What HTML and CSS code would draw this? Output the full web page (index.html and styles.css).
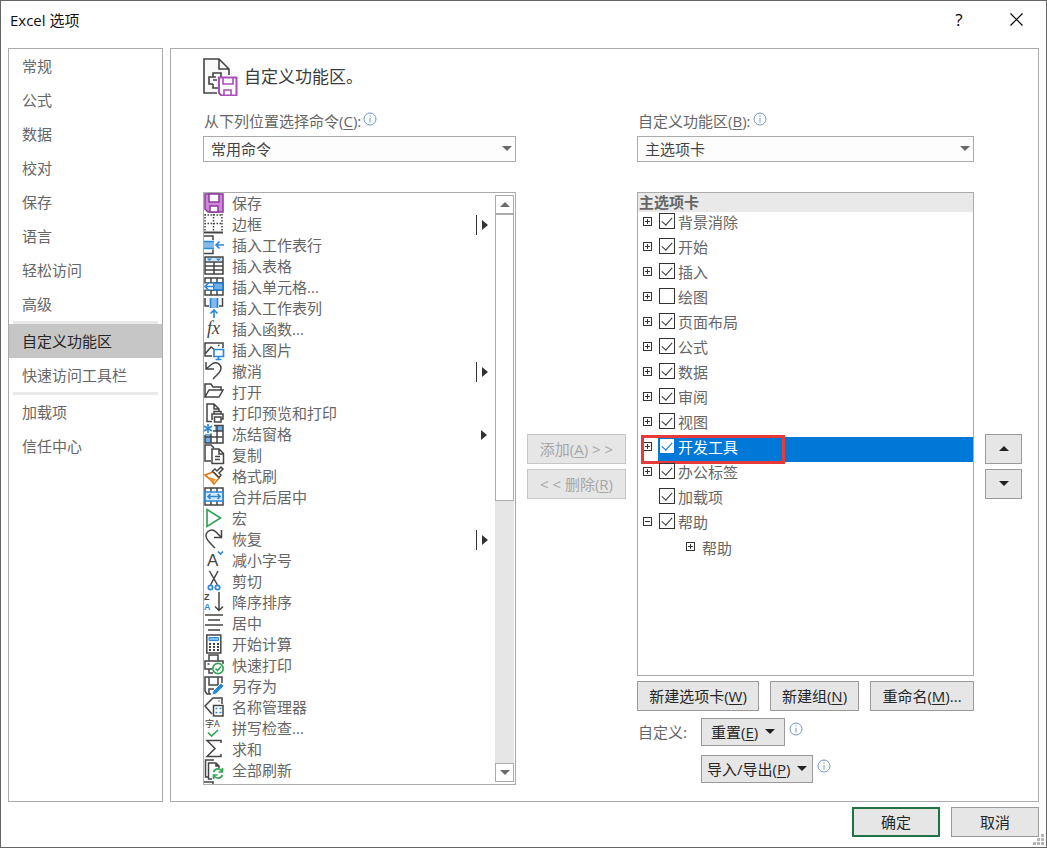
FILE: index.html
```html
<!DOCTYPE html>
<html lang="zh-CN">
<head>
  <meta charset="UTF-8" />
  <meta name="viewport" content="width=device-width, initial-scale=1.0"/>
  <title>Excel 选项</title>
  <link rel="stylesheet" href="styles.css">
</head>
<body>

  <div class="dialog">
    <header class="titlebar">
      <h1>Excel 选项</h1>
      <button class="title-btn" aria-label="帮助">?</button>
      <button class="title-btn" aria-label="关闭">
        <svg width="13" height="13" viewBox="0 0 13 13"><path d="M.5.5l12 12M12.5.5l-12 12" fill="none" stroke="#000" stroke-width="1.2"/></svg>
      </button>
    </header>

    <div class="content">
      <nav class="sidebar">
        <a href="#">常规</a>
        <a href="#">公式</a>
        <a href="#">数据</a>
        <a href="#">校对</a>
        <a href="#">保存</a>
        <a href="#">语言</a>
        <a href="#">轻松访问</a>
        <a href="#">高级</a>
        <hr>
        <a href="#" class="active">自定义功能区</a>
        <a href="#">快速访问工具栏</a>
        <hr>
        <a href="#">加载项</a>
        <a href="#">信任中心</a>
      </nav>

      <main class="panel">
        <div class="heading">
          <svg width="35" height="38" viewBox="0 0 35 38" fill="none" stroke="#444" stroke-width="1.6">
            <path d="M14 35H1V1h15l10 10v6M16 1v10h10" fill="#fafafa"/>
            <path d="M10 19v-4h8v4M13 19H6v7h4M10 26v4h5M10 22h4" />
            <path d="M16 19.500h17.500v18H18.500l-2.500-2.500z" fill="#fff" stroke="#a94fb8" stroke-width="2"/>
            <path d="M20 20v6h10v-6M21 37v-5h7v5" stroke="#a94fb8" stroke-width="1.600"/>
          </svg>
          <h2>自定义功能区。</h2>
        </div>

        <div class="columns">
          <section class="column">
            <div class="field-label">
              <label for="source">从下列位置选择命令(<u>C</u>):</label>
              <svg class="info" viewBox="0 0 14 14"><circle cx="7" cy="7" r="6"/><path d="M7 6v4.500M7 3.500v1.200"/></svg>
            </div>
            <div class="select">
              <select id="source"><option>常用命令</option></select>
            </div>

            <div class="listbox">
              <ul class="commands">
                <li><svg class="ico" viewBox="0 0 20 20"><path d="M1 1h18v18H4l-3-3z" fill="#cf86dc" stroke="#8a3b99" stroke-width="1.500"/><path d="M5 1v8h10V1zM6 19v-6h8v6z" fill="#fff" stroke="#8a3b99" stroke-width="1.500"/></svg>保存</li>
                <li class="split"><svg class="ico" viewBox="0 0 20 20"><path d="M.5 1h18M.5 9.500h18M1 0v17M9.500 0v17M18 0v17" stroke-dasharray="1.500 1.500"/><path d="M0 18.500h19" stroke-width="2"/></svg>边框</li>
                <li><svg class="ico" viewBox="0 0 20 20"><path d="M0 1h9v4M0 18.500h9v-4"/><path d="M0 6.500h10v7H0z" fill="#83b9ec" stroke="none"/><path class="blue" d="M0 6.500h10M0 13.500h10M20 10h-8M15.500 6.500L12 10l3.500 3.500"/></svg>插入工作表行</li>
                <li><svg class="ico" viewBox="0 0 20 20"><path d="M1 1h18v4H1z" fill="#cfe6fa" stroke="none"/><path d="M1 1h18v17H1zM1 6h18M1 10h18M1 14h18M10 6v12"/><path d="M3 2.500h5l-2.500 2.500zM12 2.500h5l-2.500 2.500z" fill="#2b88d8" stroke="none"/></svg>插入表格</li>
                <li><svg class="ico" viewBox="0 0 20 20"><path d="M1 1h18v17H1zM1 6h18M1 13h18M7 1v17M13 1v17"/><path d="M9 6h10v7H9z" fill="#6bb1ee" stroke="#1c77c9"/><path d="M0 6.500h9v6H0z" fill="#fff" stroke="none"/><path class="blue" d="M11 9.500H1M5 5.500l-4 4 4 4"/></svg>插入单元格...</li>
                <li><svg class="ico" viewBox="0 0 20 20"><path d="M1 0v8h4M18.500 0v8H15"/><path d="M6.500 0h7v10h-7z" fill="#83b9ec" stroke="none"/><path class="blue" d="M6.500 0v10M13.500 0v10M10 20v-8M6.500 15.500L10 12l3.500 3.500"/></svg>插入工作表列</li>
                <li><svg class="ico" viewBox="0 0 20 20"><text class="fx" x="3" y="15">fx</text></svg>插入函数...</li>
                <li><svg class="ico" viewBox="0 0 20 20"><path d="M8 16H1V3h18v5M1 14l6-7 4 3M14 5.500h1.500"/><path class="blue" d="M10 9.500h9.500v7H10zM14.500 17v2.500M11.500 19.500h6" fill="#fff"/></svg>插入图片</li>
                <li class="split"><svg class="ico" viewBox="0 0 20 20"><path d="M2 1v7h8M2 8l6-5c4-3 9 0 9 4 0 5-5 7-8 11"/></svg>撤消</li>
                <li><svg class="ico" viewBox="0 0 20 20"><path d="M1 15V2h6l2 3h8v3M1 15L5 8h14l-4 7z"/></svg>打开</li>
                <li><svg class="ico" viewBox="0 0 20 20"><path d="M8 18.500H3V1h7l5 5v2M10 1v5h5"/><path d="M10 11V8.500h7V11M9 16h-1v-5H19v5h-2M10.500 14h6.500v5h-6.500z"/></svg>打印预览和打印</li>
                <li class="more"><svg class="ico" viewBox="0 0 20 20"><path d="M11 2h8v5h-8zM1 10h6v9H1z" fill="#6bb1ee" stroke="none"/><path d="M10 1.500h9V19H1v-8M9 7h10M1 13h18M7 9.500V19M13 1v18"/><path class="blue" d="M4 0v9M0 2l8 5M8 2L0 7"/></svg>冻结窗格</li>
                <li><svg class="ico" viewBox="0 0 20 20"><path d="M7 16H1V0h6l3 3"/><path d="M8 4h7l4.500 4.500V18.500H8zM15 4v5h4M11 11.500h5M11 14.500h5"/></svg>复制</li>
                <li><svg class="ico" viewBox="0 0 20 20"><path class="orange" d="M1 9l8-3 6 6-5 6c-2-3-5-6-9-9z" fill="#fff"/><path d="M4 11l8 2-3 4z" fill="#f3932d" stroke="none"/><path d="M8.500 5L11 3l2 2 4-4 2 2-4 4 2 2-2 2.500z" fill="#fff"/></svg>格式刷</li>
                <li><svg class="ico" viewBox="0 0 20 20"><path d="M1 1h18v17H1zM7 1v4M13 1v4M7 14v4M13 14v4"/><path class="blue" d="M1 5h18v9H1z" fill="#d9ebfb"/><path class="blue" d="M4 9.500h12M6.500 7L4 9.500 6.500 12M13.500 7L16 9.500 13.500 12"/></svg>合并后居中</li>
                <li><svg class="ico" viewBox="0 0 20 20"><path class="green" d="M3 1.500v17L16.500 10z"/></svg>宏</li>
                <li class="split"><svg class="ico" viewBox="0 0 20 20"><path d="M17.500 1v7.500H10M17 8l-5-5C8-1 2 2 2 7c0 4 5 8 9 12"/></svg>恢复</li>
                <li><svg class="ico" viewBox="0 0 20 20"><text class="letter" x="3" y="16">A</text><path class="blue" d="M14 1.500l2.500 2.500L19 1.500"/></svg>减小字号</li>
                <li><svg class="ico" viewBox="0 0 20 20"><path d="M5.500 0l8 14M14 0L6.500 14"/><circle class="blue" cx="6.500" cy="16.500" r="2.200"/><circle class="blue" cx="13.500" cy="16.500" r="2.200"/></svg>剪切</li>
                <li><svg class="ico" viewBox="0 0 20 20"><text class="tiny" x="0" y="8">Z</text><text class="tiny tint" x="0" y="18">A</text><path d="M15 0v18M11 14.500l4 4 4-4"/></svg>降序排序</li>
                <li><svg class="ico" viewBox="0 0 20 20"><path d="M1 2h18M4 7h12M1 12h18M4 17h12"/></svg>居中</li>
                <li><svg class="ico" viewBox="0 0 20 20"><path d="M2.800 1h14v18h-14z"/><path d="M5 3.500h9.500v3H5z" fill="#7cc0f5" stroke="#2b88d8" stroke-width="1"/><path d="M5 10h2M9 10h2M13 10h2M5 13h2M9 13h2M13 13h2M5 16h2M9 16h2M13 16h2" stroke-width="2"/></svg>开始计算</li>
                <li><svg class="ico" viewBox="0 0 20 20"><path d="M5 6V0h9v6M8 14H5v4h4M5 14H1V6h18v3M3.500 9h2"/><circle class="green" cx="14" cy="13.500" r="5.200" fill="#fff"/><path class="green" d="M11.500 13.500l2 2 3.500-4"/></svg>快速打印</li>
                <li><svg class="ico" viewBox="0 0 20 20"><path d="M7 18H3l-2-3V1h17v6M5 1v8h9V1M5 18v-5h5"/><path d="M8 19l1-4 8-8 3 3-8 8z" fill="#2b88d8" stroke="#fff" stroke-width=".8"/></svg>另存为</li>
                <li><svg class="ico" viewBox="0 0 20 20"><path d="M8 17L1 9l8-8h9v6M14.500 4h1"/><path d="M9.500 8.500H19V19H9.500z" fill="#fff"/><path class="blue" d="M11.500 11.500h2M15.500 11.500h2M11.500 15.500h2M15.500 15.500h2" stroke-width="2.200"/></svg>名称管理器</li>
                <li><svg class="ico" viewBox="0 0 20 20"><text class="spell" x="1" y="9">字A</text><path class="green" d="M4 14.500l3.500 3.500 6.500-6"/></svg>拼写检查...</li>
                <li><svg class="ico" viewBox="0 0 20 20"><path d="M17 4V1.500H3l8 8-8 8h14V15"/></svg>求和</li>
                <li><svg class="ico" viewBox="0 0 20 20"><path d="M4 17H1.500V0H10M8 19H4.500V3H12l3 3v2M12 3v3h3"/><path class="green" d="M9.500 12c2-4 6-4 8.500-1M18.500 8v4h-4M18.500 15c-2 4-6 4-8.500 1M9.500 19v-4h4"/></svg>全部刷新</li>
                <li class="cut"><svg class="ico" viewBox="0 0 20 20"><path d="M0 1h9v4"/></svg></li>
              </ul>
              <div class="scrollbar">
                <button class="up" aria-label="向上滚动"></button>
                <div class="thumb"></div>
                <div class="track"></div>
                <button class="down" aria-label="向下滚动"></button>
              </div>
            </div>
          </section>

          <div class="stack">
            <button class="btn" disabled>添加(<u>A</u>) &gt; &gt;</button>
            <button class="btn" disabled>&lt; &lt; 删除(<u>R</u>)</button>
          </div>

          <section class="column">
            <div class="field-label">
              <label for="target">自定义功能区(<u>B</u>):</label>
              <svg class="info" viewBox="0 0 14 14"><circle cx="7" cy="7" r="6"/><path d="M7 6v4.500M7 3.500v1.200"/></svg>
            </div>
            <div class="select">
              <select id="target"><option>主选项卡</option></select>
            </div>

            <div class="tree">
              <h3>主选项卡</h3>
              <ul>
                <li><button class="expander" aria-label="展开"></button><input type="checkbox" id="t1" checked><label for="t1">背景消除</label></li>
                <li><button class="expander" aria-label="展开"></button><input type="checkbox" id="t2" checked><label for="t2">开始</label></li>
                <li><button class="expander" aria-label="展开"></button><input type="checkbox" id="t3" checked><label for="t3">插入</label></li>
                <li><button class="expander" aria-label="展开"></button><input type="checkbox" id="t4"><label for="t4">绘图</label></li>
                <li><button class="expander" aria-label="展开"></button><input type="checkbox" id="t5" checked><label for="t5">页面布局</label></li>
                <li><button class="expander" aria-label="展开"></button><input type="checkbox" id="t6" checked><label for="t6">公式</label></li>
                <li><button class="expander" aria-label="展开"></button><input type="checkbox" id="t7" checked><label for="t7">数据</label></li>
                <li><button class="expander" aria-label="展开"></button><input type="checkbox" id="t8" checked><label for="t8">审阅</label></li>
                <li><button class="expander" aria-label="展开"></button><input type="checkbox" id="t9" checked><label for="t9">视图</label></li>
                <li class="selected"><button class="expander" aria-label="展开"></button><input type="checkbox" id="t10" checked><label for="t10">开发工具</label><span class="marker"></span></li>
                <li><button class="expander" aria-label="展开"></button><input type="checkbox" id="t11" checked><label for="t11">办公标签</label></li>
                <li class="leaf"><input type="checkbox" id="t12" checked><label for="t12">加载项</label></li>
                <li><button class="expander open" aria-label="折叠"></button><input type="checkbox" id="t13" checked><label for="t13">帮助</label></li>
                <li class="child"><button class="expander" aria-label="展开"></button><span>帮助</span></li>
              </ul>
            </div>

            <div class="tab-actions">
              <button class="btn">新建选项卡(<u>W</u>)</button>
              <button class="btn">新建组(<u>N</u>)</button>
              <button class="btn">重命名(<u>M</u>)...</button>
            </div>
            <div class="customize">
              <span class="caption">自定义:</span>
              <button class="btn menu reset"><span>重置(<u>E</u>)</span></button>
              <svg class="info" viewBox="0 0 14 14"><circle cx="7" cy="7" r="6"/><path d="M7 6v4.500M7 3.500v1.200"/></svg>
            </div>
            <div class="customize">
              <span class="caption"></span>
              <button class="btn menu"><span>导入/导出(<u>P</u>)</span></button>
              <svg class="info" viewBox="0 0 14 14"><circle cx="7" cy="7" r="6"/><path d="M7 6v4.500M7 3.500v1.200"/></svg>
            </div>
          </section>

          <div class="stack">
            <button class="btn move up" aria-label="上移"></button>
            <button class="btn move down" aria-label="下移"></button>
          </div>
        </div>
      </main>
    </div>

    <footer class="footer">
      <button class="btn primary">确定</button>
      <button class="btn">取消</button>
    </footer>

    <svg class="grip" width="11" height="11" viewBox="0 0 11 11" fill="#b5b5b5"><path d="M8 0h3v3H8zM4 4h3v3H4zM8 4h3v3H8zM0 8h3v3H0zM4 8h3v3H4zM8 8h3v3H8z"/></svg>
  </div>

</body>
</html>
```
FILE: styles.css
```css
* { box-sizing: border-box; margin: 0; padding: 0; }

body {
  font-family: "Open Sans", "Noto Sans CJK SC", sans-serif;
  font-size: 15px;
  color: #666;
  background: #fff;
}

button, select {
  font: inherit;
  color: inherit;
}

ul { list-style: none; }

u { text-underline-offset: 2px; }

.dialog {
  position: relative;
  display: flex;
  flex-direction: column;
  min-height: 100vh;
  padding: 0 7px;
  border: 1px solid #666;
}

/* title bar */
.titlebar {
  display: flex;
  align-items: center;
  height: 47px;
  padding: 0 0 11px 2px;
}

.titlebar h1 {
  flex: 1;
  font-size: 15px;
  font-weight: normal;
  color: #111;
}

.title-btn {
  display: flex;
  align-items: center;
  justify-content: center;
  width: 46px;
  height: 30px;
  margin-left: 11px;
  border: none;
  background: none;
  color: #000;
  font-size: 17px;
}

.content {
  flex: 1;
  display: flex;
  gap: 7px;
}

/* category list */
.sidebar {
  flex: none;
  width: 155px;
  border: 1px solid #ababab;
}

.sidebar a {
  display: block;
  height: 34px;
  padding-left: 13px;
  line-height: 34px;
  color: #666;
  text-decoration: none;
}

.sidebar a.active {
  background: #c6c6c6;
  color: #262626;
}

.sidebar hr {
  height: 3px;
  margin: 0 4px;
  border: none;
  background: #e9e9e9;
}

.panel {
  flex: 1;
  display: flex;
  flex-direction: column;
  padding: 9px 16px 16px 32px;
  border: 1px solid #ababab;
}

.heading {
  display: flex;
  align-items: center;
  gap: 6px;
  margin-bottom: 14px;
}

.heading h2 {
  font-size: 17px;
  font-weight: normal;
  line-height: 24px;
  color: #3b3b3b;
}

.columns {
  flex: 1;
  display: grid;
  grid-template-columns: 313fr 99px 337fr 37px;
  gap: 11px;
}

.column {
  display: flex;
  flex-direction: column;
}

.field-label {
  display: flex;
  height: 26px;
  padding-left: 1px;
  line-height: 22px;
}

.info {
  flex: none;
  width: 14px;
  height: 14px;
  margin: 2px 0 0 2px;
  fill: none;
  stroke: #6f94c4;
}

.select {
  position: relative;
  margin-bottom: 30px;
}

.select select {
  display: block;
  width: 100%;
  height: 26px;
  padding-left: 7px;
  border: 1px solid #ababab;
  border-radius: 0;
  background: #fdfdfd;
  color: #444;
  appearance: none;
}

.select::after {
  content: "";
  position: absolute;
  top: 10px;
  right: 4px;
  border: 5px solid transparent;
  border-top-color: #6a6a6a;
  border-bottom: none;
}

/* command list */
.listbox {
  flex: 1;
  display: flex;
  border: 1px solid #ababab;
}

.commands {
  flex: 1;
}

.commands li {
  display: flex;
  align-items: center;
  gap: 8px;
  height: 21px;
  line-height: 23px;
}

.commands .cut {
  height: 3px;
  overflow: hidden;
}

.ico {
  flex: none;
  align-self: flex-start;
  width: 20px;
  height: 20px;
  fill: none;
  stroke: #444;
  stroke-width: 1.5;
  overflow: visible;
}

.ico .blue { stroke: #2b88d8; stroke-width: 1.7; }
.ico .green { stroke: #37a35a; stroke-width: 1.7; }
.ico .orange { stroke: #e07c1c; stroke-width: 1.6; }
.ico text { fill: #444; stroke: none; }
.ico .fx { font: italic 18px "Liberation Serif", serif; }
.ico .letter { font: 17px "Liberation Sans", sans-serif; }
.ico .tiny { font: bold 9px "Liberation Sans", sans-serif; }
.ico .tint { fill: #2b88d8; }
.ico .spell { font-size: 9px; }

/* entries that open a submenu */
.commands .split::before {
  content: "";
  order: 1;
  width: 1px;
  height: 20px;
  margin-left: auto;
  background: #333;
}

.commands .split::after,
.commands .more::after {
  content: "";
  order: 2;
  border: 5px solid transparent;
  border-left: 6px solid #333;
  border-right: none;
}

.commands .split::after { margin: 0 7px 0 -3px; }
.commands .more::after { margin: 0 8px 0 auto; }

.scrollbar {
  display: flex;
  flex-direction: column;
  width: 19px;
  margin: 2px 1px 2px 0;
  background: #e6e6e6;
}

.scrollbar button {
  display: flex;
  align-items: center;
  justify-content: center;
  height: 19px;
  border: 1px solid #ababab;
  background: #fff;
}

.thumb {
  flex: 286;
  border: 1px solid #ababab;
  background: #fff;
}

.track { flex: 263; }

.up::before,
.down::before {
  content: "";
  border: 5px solid transparent;
}

.up::before { border-bottom-color: #6a6a6a; border-top: none; }
.down::before { border-top-color: #6a6a6a; border-bottom: none; }

/* buttons */
.btn {
  height: 30px;
  padding-bottom: 2px;
  border: 1px solid #9a9a9a;
  background: #e6e6e6;
  color: #262626;
  white-space: nowrap;
}

.btn:disabled {
  border-color: #c6c6c6;
  color: #a6a6a6;
}

.stack {
  display: flex;
  flex-direction: column;
  gap: 5px;
  margin-top: 324px;
}

.move {
  display: flex;
  align-items: center;
  justify-content: center;
}

.move.up::before { border-bottom-color: #222; }
.move.down::before { border-top-color: #222; }

/* ribbon tab tree */
.tree {
  flex: 1;
  border: 1px solid #ababab;
}

.tree h3 {
  height: 19px;
  padding-left: 1px;
  background: #e9e9e9;
  font-size: 15px;
  line-height: 19px;
}

.tree li {
  position: relative;
  display: flex;
  align-items: flex-start;
  height: 25px;
  padding-left: 5px;
  line-height: 20px;
}

.tree .leaf { padding-left: 21px; }
.tree .child { padding-left: 48px; line-height: 22px; }

.expander {
  width: 9px;
  height: 9px;
  margin: 5px 7px 0 0;
  border: 1px solid #333;
  background:
    linear-gradient(#333, #333) center / 5px 1px no-repeat,
    linear-gradient(#333, #333) center / 1px 5px no-repeat;
}

.expander.open {
  background: linear-gradient(#333, #333) center / 5px 1px no-repeat;
}

.tree input {
  display: flex;
  justify-content: center;
  width: 16px;
  height: 16px;
  margin: 1px 3px 0 0;
  border: 1px solid #333;
  background: #fff;
  appearance: none;
}

.tree input:checked::before {
  content: "";
  width: 5px;
  height: 9px;
  margin-top: 1px;
  border: solid #333;
  border-width: 0 1px 1px 0;
  transform: rotate(42deg);
}

.tree .selected {
  background: linear-gradient(#fff, #fff) left / 20px 100% no-repeat #0078d7;
  color: #fff;
}

.tree .selected input {
  border-color: #0078d7;
}

.tree .selected input:checked::before {
  border-color: #0078d7;
}

.marker {
  position: absolute;
  top: -2px;
  left: 3px;
  width: 144px;
  height: 29px;
  border: 3px solid #e83a3a;
}

.tab-actions {
  display: grid;
  grid-template-columns: 122fr 89fr 104fr;
  gap: 11px;
  margin: 5px 0 7px;
}

.customize {
  display: flex;
  gap: 3px;
  margin-bottom: 9px;
}

.customize:last-child { margin-bottom: 2px; }

.caption {
  width: 61px;
  padding-left: 1px;
  line-height: 28px;
}

.menu {
  display: flex;
  align-items: center;
  gap: 7px;
  height: 28px;
  padding: 0 5px 1px;
}

.menu.reset { padding: 0 9px 1px; }

.menu::after {
  content: "";
  border: 5px solid transparent;
  border-top-color: #222;
  border-bottom: none;
}

.customize .info { margin: 4px 0 0 1px; }

.footer {
  display: flex;
  justify-content: flex-end;
  gap: 11px;
  padding: 5px 0 10px;
}

.footer .btn { width: 88px; }

.footer .primary { border: 2px solid #217346; }

.grip {
  position: absolute;
  right: 2px;
  bottom: 2px;
}
```
